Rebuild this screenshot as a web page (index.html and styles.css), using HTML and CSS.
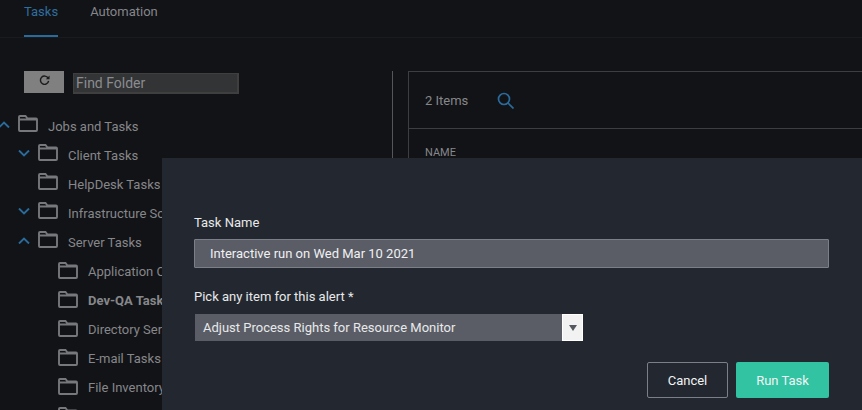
FILE: index.html
```html
<!DOCTYPE html>
<html lang="en">
<head>
  <meta charset="UTF-8" />
  <title>Tasks</title>
  <link rel="stylesheet" href="styles.css">
</head>
<body>
  <svg class="defs" width="0" height="0">
    <symbol id="folder" viewBox="0 0 20 17">
      <path d="M1 15V2c0-.6.4-1 1-1h5.500l2 2.500H18c.6 0 1 .4 1 1V15c0 .6-.4 1-1 1H2c-.6 0-1-.4-1-1zM1 4.500h18" fill="none" stroke="currentColor" stroke-width="1.900"/>
    </symbol>
    <symbol id="up" viewBox="0 0 12 7"><path d="M1 6.500l5-5 5 5" fill="none" stroke="currentColor" stroke-width="1.900"/></symbol>
    <symbol id="down" viewBox="0 0 12 7"><path d="M1 .5l5 5 5-5" fill="none" stroke="currentColor" stroke-width="1.900"/></symbol>
  </svg>

  <nav class="tabs">
    <a class="tab active">Tasks</a>
    <a class="tab">Automation</a>
  </nav>

  <div class="main">
    <aside class="sidebar">
      <div class="tools">
        <button class="refresh">
          <svg width="11" height="11" viewBox="0 0 12 12"><path d="M10 3.500A4.500 4.500 0 1 0 10.500 6.500" fill="none" stroke="#1c1c1c" stroke-width="1.600"/><path d="M7.500 4.500h4V.5z" fill="#1c1c1c"/></svg>
        </button>
        <input class="find" placeholder="Find Folder">
      </div>
      <ul class="tree">
        <li class="row root"><svg class="chev"><use href="#up"/></svg><svg class="folder"><use href="#folder"/></svg><span>Jobs and Tasks</span></li>
        <li class="row lvl1"><svg class="chev"><use href="#down"/></svg><svg class="folder"><use href="#folder"/></svg><span>Client Tasks</span></li>
        <li class="row leaf1"><svg class="folder"><use href="#folder"/></svg><span>HelpDesk Tasks</span></li>
        <li class="row lvl1"><svg class="chev"><use href="#down"/></svg><svg class="folder"><use href="#folder"/></svg><span>Infrastructure Software Tasks</span></li>
        <li class="row lvl1"><svg class="chev"><use href="#up"/></svg><svg class="folder"><use href="#folder"/></svg><span>Server Tasks</span></li>
        <li class="row leaf2"><svg class="folder"><use href="#folder"/></svg><span>Application Control</span></li>
        <li class="row leaf2 current"><svg class="folder"><use href="#folder"/></svg><span>Dev-QA Tasks</span></li>
        <li class="row leaf2"><svg class="folder"><use href="#folder"/></svg><span>Directory Services</span></li>
        <li class="row leaf2"><svg class="folder"><use href="#folder"/></svg><span>E-mail Tasks</span></li>
        <li class="row leaf2"><svg class="folder"><use href="#folder"/></svg><span>File Inventory</span></li>
        <li class="row leaf2"><svg class="folder"><use href="#folder"/></svg></li>
      </ul>
    </aside>

    <section class="content">
      <div class="panel">
        <div class="panel-head">
          <span class="count">2 Items</span>
          <svg class="search" width="17" height="17" viewBox="0 0 17 17"><circle cx="7" cy="7" r="5.500" fill="none" stroke="currentColor" stroke-width="1.700"/><path d="M11 11l5.500 5.500" stroke="currentColor" stroke-width="1.700"/></svg>
        </div>
        <div class="col-name">NAME</div>
      </div>
    </section>
  </div>

  <div class="modal">
    <label class="label">Task Name</label>
    <input class="name-input" value="Interactive run on Wed Mar 10 2021">
    <label class="label pick">Pick any item for this alert *</label>
    <div class="select">
      <span class="select-text">Adjust Process Rights for Resource Monitor</span>
      <span class="select-arrow"></span>
    </div>
    <div class="actions">
      <button class="btn cancel">Cancel</button>
      <button class="btn run">Run Task</button>
    </div>
  </div>
</body>
</html>
```

FILE: styles.css
```css
* {
  box-sizing: border-box;
}

html, body {
  height: 100%;
}

body {
  margin: 0;
  background: #121317;
  color: #86878a;
  font-family: Roboto, "Liberation Sans", sans-serif;
  font-size: 13px;
  overflow: hidden;
}

.defs {
  display: block;
}

.tabs {
  display: flex;
  gap: 32px;
  height: 38px;
  padding-left: 24px;
  border-bottom: 1px solid #191b1f;
}

.tab {
  height: 37px;
  padding-top: 4px;
  line-height: 15px;
  border-bottom: 2px solid transparent;
  color: #84868a;
}

.tab.active {
  color: #2f6f9f;
  border-bottom-color: #2a6b9c;
}

.main {
  display: flex;
  padding-top: 33px;
}

.sidebar {
  width: 393px;
  height: 339px;
  overflow: hidden;
  border-right: 1px solid #55565a;
}

.tools {
  display: flex;
  align-items: flex-start;
  padding-left: 24px;
}

.refresh {
  display: flex;
  align-items: center;
  justify-content: center;
  width: 40px;
  height: 22px;
  padding: 0 0 4px;
  border: 0;
  background: #808080;
}

.find {
  width: 166px;
  height: 21px;
  margin: 2px 0 0 9px;
  padding: 0 2px;
  border: 1px solid #3f3f3f;
  border-width: 1px 2px 2px 1px;
  background: #333436;
  font: 14px Roboto, sans-serif;
  color: #8b8c8f;
}

.find::placeholder {
  color: #8b8c8f;
  opacity: 1;
}

.tree {
  list-style: none;
  margin: 18px 0 0;
  padding: 0;
}

.row {
  display: flex;
  align-items: center;
  width: 162px;
  height: 29px;
  white-space: nowrap;
}

.row span {
  min-width: 0;
  overflow: hidden;
}

.chev {
  width: 12px;
  height: 7px;
  margin-bottom: 5px;
  margin-right: 8px;
  color: #2a6b9c;
  flex: none;
}

.folder {
  width: 20px;
  height: 17px;
  margin-right: 10px;
  margin-bottom: 6px;
  color: #77787b;
  flex: none;
}

.row.root {
  margin-left: -2px;
  width: 164px;
}

.row.lvl1 {
  padding-left: 18px;
}

.row.leaf1 {
  padding-left: 38px;
}

.row.leaf2 {
  padding-left: 58px;
}

.row.leaf2 .folder {
  margin-bottom: 3px;
}

.row.current span {
  font-weight: 700;
}

.content {
  flex: 1;
  padding-left: 15px;
}

.panel {
  height: 200px;
  border: 1px solid #3d3e42;
  border-right: 0;
}

.panel-head {
  display: flex;
  align-items: center;
  height: 57px;
  padding-left: 16px;
  border-bottom: 1px solid #3d3e42;
}

.count {
  width: 72px;
}

.search {
  color: #2a6b9c;
}

.col-name {
  padding: 17px 0 0 16px;
  font-size: 11px;
}

/* dialog lies over the page */
.modal {
  position: absolute;
  left: 162px;
  top: 158px;
  right: 0;
  bottom: 0;
  padding: 57px 33px 0 32px;
  background: #232830;
  color: #e8e9ea;
}

.label {
  display: block;
  font-size: 13px;
  line-height: 16px;
}

.name-input {
  display: block;
  width: 100%;
  height: 29px;
  margin-top: 8px;
  padding: 0 15px 1px;
  border: 1px solid #7b7f87;
  border-radius: 1px;
  background: #5a5d66;
  color: #f0f0f2;
  font: 13px Roboto, sans-serif;
}

.pick {
  margin-top: 21px;
}

.select {
  display: flex;
  align-items: center;
  justify-content: space-between;
  width: 388px;
  height: 27px;
  margin: 9px 0 0 1px;
  padding-left: 8px;
  background: #5a5d66;
  font-size: 13px;
}

.select-arrow {
  display: flex;
  align-items: center;
  justify-content: center;
  width: 21px;
  height: 27px;
  background: #f2f2f2;
  border: 1px solid #fff;
}

.select-arrow::after {
  content: "";
  border: 4px solid transparent;
  border-top: 6px solid #55585f;
  border-bottom: 0;
}

.actions {
  display: flex;
  justify-content: flex-end;
  gap: 8px;
  margin-top: 21px;
}

.btn {
  height: 36px;
  border-radius: 2px;
  font: 13px Roboto, sans-serif;
  color: #f2f3f4;
}

.cancel {
  width: 81px;
  background: transparent;
  border: 1px solid #7b7f87;
}

.run {
  width: 93px;
  background: #31c3a2;
  border: 0;
}
```
